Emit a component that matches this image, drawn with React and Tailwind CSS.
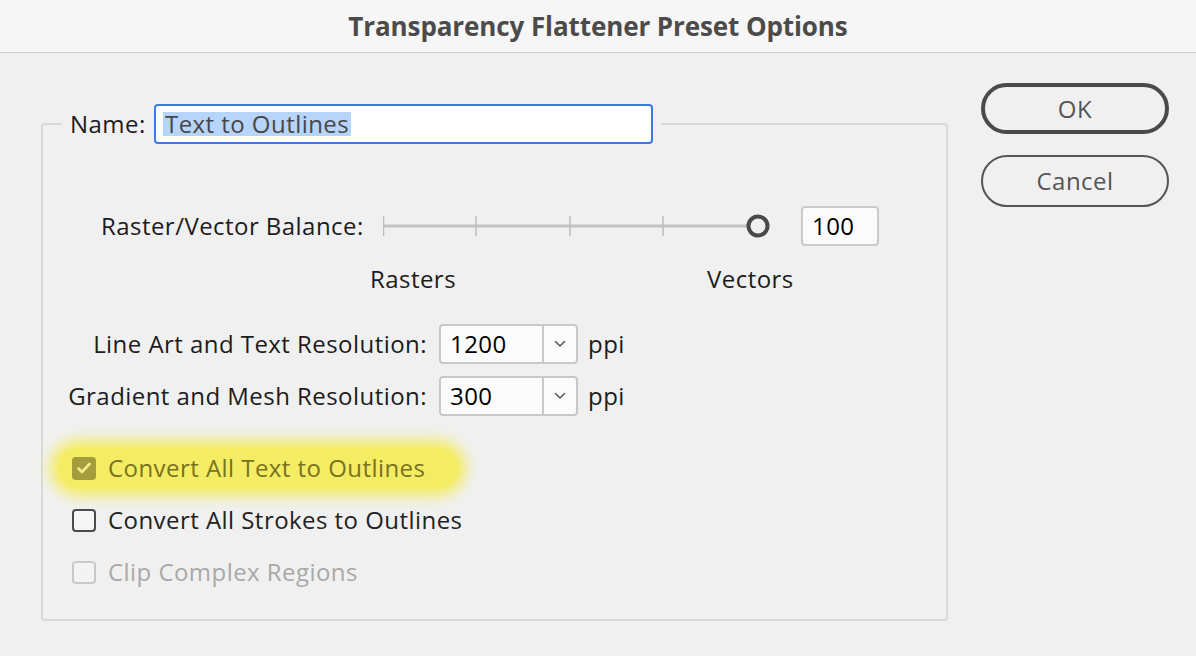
export default function App() {
  return (
    <div className="w-[1196px] h-[656px] bg-[#f0f0f0] overflow-hidden font-['Open_Sans',sans-serif] text-[24px] tracking-[0.45px] text-[#1c1c1c]">
      {/* Title bar */}
      <div className="h-[53px] bg-[#f6f6f6] border-b border-[#d0d0d0] flex items-center justify-center">
        <span className="text-[26px] font-bold text-[#4b4b4b] tracking-[-0.1px]">Transparency Flattener Preset Options</span>
      </div>

      <div className="flex">
        {/* Options group */}
        <fieldset className="ml-[41px] mt-[51px] w-[907px] h-[517px] border-2 border-[#d9d9d9] rounded-[4px]">
          <legend className="ml-[19px] px-[8px]">
            <div className="flex items-center">
              <span className="w-[84px] leading-[30px]">Name:</span>
              <div className="w-[499px] h-[40px] bg-white border-2 border-[#3b7be0] rounded-[4px] flex items-center pl-[7px]">
                <span className="bg-[#b7d4fb] text-[#474747] leading-[24px] px-[2px]">Text to Outlines</span>
              </div>
            </div>
          </legend>

          {/* Raster / Vector balance */}
          <div className="mt-[62px] flex items-center h-[40px]">
            <span className="ml-[58px] w-[282px]">Raster/Vector Balance:</span>
            <svg width="390" height="30" viewBox="0 0 390 30">
              <line x1="0" y1="15" x2="365" y2="15" stroke="#c2c2c2" strokeWidth="3" />
              <line x1="0.5" y1="5" x2="0.5" y2="25" stroke="#bdbdbd" strokeWidth="1.5" />
              <line x1="93" y1="5" x2="93" y2="25" stroke="#bdbdbd" strokeWidth="1.5" />
              <line x1="187" y1="5" x2="187" y2="25" stroke="#bdbdbd" strokeWidth="1.5" />
              <line x1="280" y1="5" x2="280" y2="25" stroke="#bdbdbd" strokeWidth="1.5" />
              <circle cx="375" cy="15" r="9.5" fill="#f0f0f0" stroke="#4a4a4a" strokeWidth="4" />
            </svg>
            <div className="ml-[28px] w-[78px] h-[40px] bg-[#fbfbfb] border-2 border-[#cbcbcb] rounded-[4px] flex items-center pl-[9px] text-black">
              100
            </div>
          </div>
          <div className="mt-[18px] flex leading-[30px]">
            <span className="ml-[327px] w-[337px]">Rasters</span>
            <span>Vectors</span>
          </div>

          {/* Resolutions */}
          <div className="mt-[30px] flex items-center">
            <span className="w-[384px] text-right">Line Art and Text Resolution:</span>
            <Select value="1200" />
            <span className="ml-[10px]">ppi</span>
          </div>
          <div className="mt-[12px] flex items-center">
            <span className="w-[384px] text-right">Gradient and Mesh Resolution:</span>
            <Select value="300" />
            <span className="ml-[10px]">ppi</span>
          </div>

          {/* Checkboxes */}
          <div className="mt-[32px] ml-[15px] w-[400px] py-[6px] pl-[14px] flex items-center rounded-full bg-[#f4ec63] shadow-[0_0_14px_8px_#f4ec63]">
            <span className="w-[24px] h-[23px] rounded-[4px] bg-[#a59c3b] flex items-center justify-center">
              <svg width="14" height="12" viewBox="0 0 14 12">
                <path d="M1.5 6.5l3.5 3.5 7.5-8" fill="none" stroke="#f3ec93" strokeWidth="2.6" strokeLinecap="round" strokeLinejoin="round" />
              </svg>
            </span>
            <span className="ml-[12px] leading-[28px] text-[#797221]">Convert All Text to Outlines</span>
          </div>
          <div className="mt-[18px] ml-[29px] flex items-center">
            <span className="w-[24px] h-[23px] rounded-[4px] border-2 border-[#4a4a4a] bg-[#f6f6f6]" />
            <span className="ml-[12px] leading-[28px] text-[#222]">Convert All Strokes to Outlines</span>
          </div>
          <div className="mt-[24px] ml-[29px] flex items-center">
            <span className="w-[24px] h-[23px] rounded-[4px] border-2 border-[#c9c9c9] bg-[#f3f3f3]" />
            <span className="ml-[12px] leading-[28px] text-[#a9a9a9]">Clip Complex Regions</span>
          </div>
        </fieldset>

        {/* Buttons */}
        <div className="ml-[33px] mt-[30px] flex flex-col gap-[21px]">
          <button className="w-[188px] h-[51px] rounded-full border-[4px] border-[#4a4a4a] bg-[#f0f0f0] text-[24px] text-[#555]">
            OK
          </button>
          <button className="w-[188px] h-[52px] rounded-full border-2 border-[#555] bg-[#f0f0f0] text-[24px] text-[#555]">
            Cancel
          </button>
        </div>
      </div>
    </div>
  );
}

function Select({ value }) {
  return (
    <div className="ml-[12px] w-[139px] h-[40px] bg-[#fbfbfb] border-2 border-[#c8c8c8] rounded-[4px] flex">
      <span className="w-[101px] pl-[9px] flex items-center text-black">{value}</span>
      <span className="flex-1 border-l-2 border-[#c8c8c8] flex items-center justify-center">
        <svg width="12" height="8" viewBox="0 0 12 8">
          <path d="M1.5 1.5l4.5 4.5 4.5-4.5" fill="none" stroke="#555" strokeWidth="1.5" strokeLinecap="round" strokeLinejoin="round" />
        </svg>
      </span>
    </div>
  );
}
